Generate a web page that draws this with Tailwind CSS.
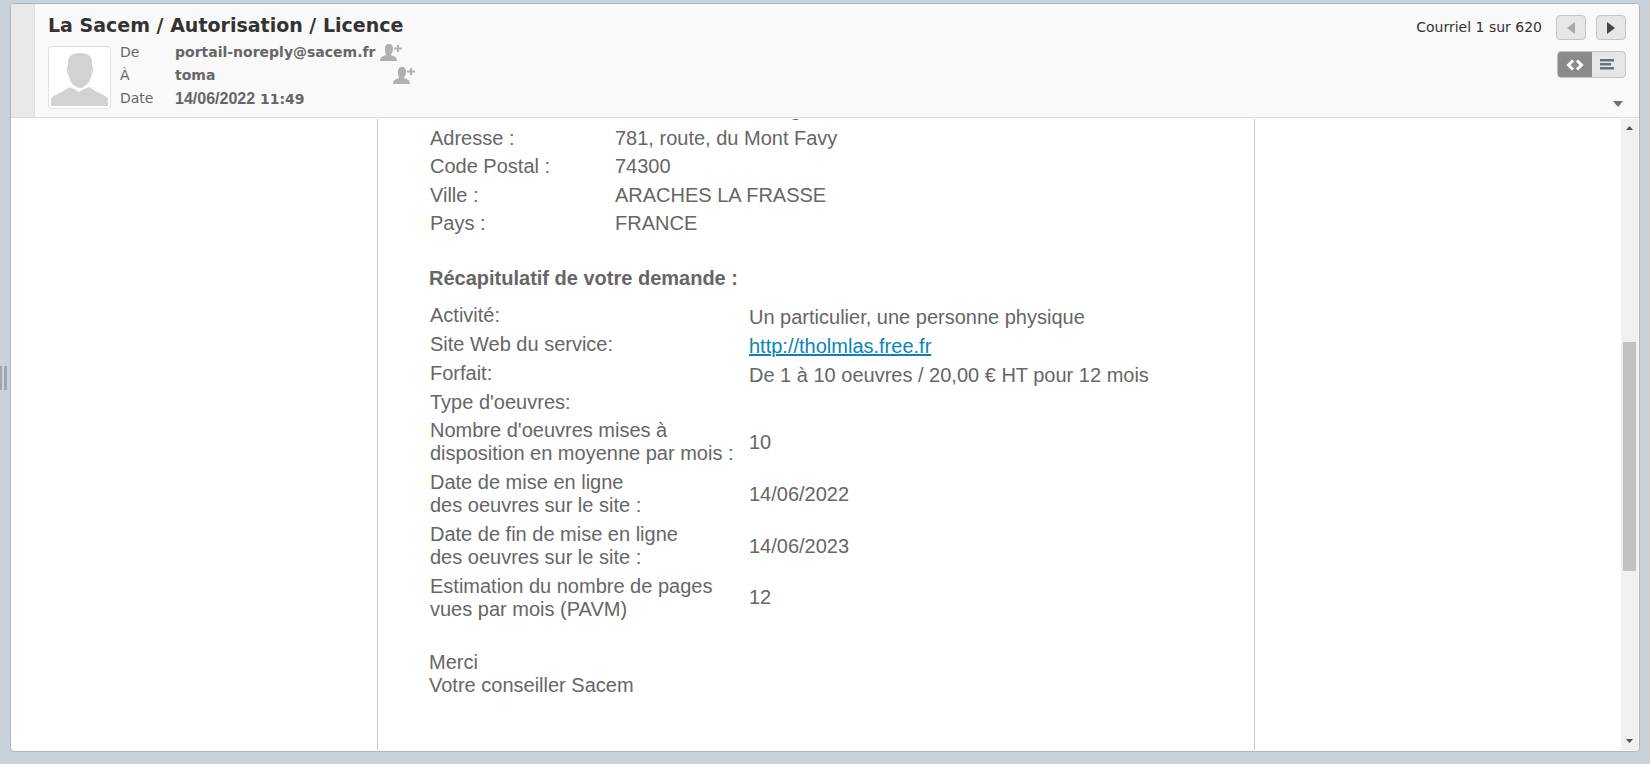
<!DOCTYPE html>
<html lang="fr">

<head>
    <meta charset="UTF-8" />
    <meta name="viewport" content="width=device-width, initial-scale=1.0" />
    <title>La Sacem / Autorisation / Licence</title>

    <script src="https://cdn.jsdelivr.net/npm/@tailwindcss/browser@4"></script>
</head>

<body class="relative flex h-screen bg-[#c9d1d9] pt-[3px] pr-[10px] pb-[12px] pl-[10px] font-['DejaVu_Sans',Verdana,sans-serif]">

    <!-- Splitter handle -->
    <div class="absolute top-[3px] bottom-[12px] left-0 flex items-center gap-[2px]">
        <span class="h-6 w-[2px] bg-[#9fa8b0]"></span>
        <span class="h-6 w-[3px] bg-[#9fa8b0]"></span>
    </div>

    <div class="flex min-w-0 flex-1 flex-col overflow-hidden rounded-[4px] border border-[#adb5bf] bg-white">

        <!-- Message header -->
        <header class="flex shrink-0 border-b border-[#dcdcdc] bg-[#f9f9f9]">
            <div class="w-6 border-r border-[#dedede] bg-[#e9e9e9]"></div>

            <div class="flex-1 pt-[9px] pb-[7px] pl-[13px]">
                <h1 class="text-[19px] leading-6 font-bold text-[#333]">La Sacem / Autorisation / Licence</h1>
                <div class="mt-[9px] flex text-[14px] text-[#666]">
                    <div class="h-[63px] w-[63px] rounded-[4px] border border-[#e1e1e1] bg-white p-[2px]">
                        <svg viewBox="0 0 57 57" class="h-full w-full" fill="#d2d2d2">
                            <path d="M17 17C16 8 20 4 29 4s13 4 12 13c2 1 1 8-1 10-1 5-2 7-5 9-4 4-8 4-12 0-3-2-4-4-5-9-2-2-3-9-1-10z" />
                            <path d="M0 57v-7c1-4 9-5 19-12 1 1 5 2 9 5 4-3 8-4 10-5 10 7 18 8 19 12v7z" />
                        </svg>
                    </div>
                    <dl class="-mt-[5px] ml-[9px] grid grid-cols-[55px_240px] grid-rows-[23px_23px_23px] items-center">
                        <dt>De</dt>
                        <dd class="flex items-center gap-[4px] font-bold">portail-noreply@sacem.fr
                            <button aria-label="Ajouter au carnet d'adresses"><svg width="22" height="17" viewBox="0 0 22 17" fill="#b0b0b0"><path d="M5 5c0-3 1-5 4-5s4 2 4 5c0 3-1 4-2 5v1c3 1 6 2 6 6H0c0-4 3-5 6-6v-1C5 9 5 8 5 5z" /><path d="M18 1v7M14 4.500h8" stroke="#b0b0b0" stroke-width="2" /></svg></button>
                        </dd>
                        <dt>À</dt>
                        <dd class="flex items-center justify-between font-bold">toma
                            <button aria-label="Ajouter au carnet d'adresses"><svg width="22" height="17" viewBox="0 0 22 17" fill="#b0b0b0"><path d="M5 5c0-3 1-5 4-5s4 2 4 5c0 3-1 4-2 5v1c3 1 6 2 6 6H0c0-4 3-5 6-6v-1C5 9 5 8 5 5z" /><path d="M18 1v7M14 4.500h8" stroke="#b0b0b0" stroke-width="2" /></svg></button>
                        </dd>
                        <dt>Date</dt>
                        <dd class="font-bold"><span class="font-['Liberation_Sans',Arial,sans-serif] text-[16px]">14/06/2022</span> 11:49</dd>
                    </dl>
                </div>
            </div>

            <div class="flex flex-col items-end pt-[11px] pr-[13px]">
                <div class="flex items-center text-[14px] text-[#333]">
                    <span>Courriel 1 sur 620</span>
                    <button aria-label="Précédent" class="ml-[14px] flex h-[25px] w-[30px] items-center justify-center rounded-[4px] border border-[#c5c5c5] bg-[#e6e6e6]">
                        <svg width="8" height="12" viewBox="0 0 8 12" fill="#a8a8a8"><path d="M8 0v12L0 6z" /></svg>
                    </button>
                    <button aria-label="Suivant" class="ml-[10px] flex h-[25px] w-[30px] items-center justify-center rounded-[4px] border border-[#c5c5c5] bg-[#e6e6e6]">
                        <svg width="8" height="12" viewBox="0 0 8 12" fill="#444"><path d="M0 0v12l8-6z" /></svg>
                    </button>
                </div>
                <div class="mt-[11px] flex h-[27px] w-[69px] overflow-hidden rounded-[4px] border border-[#c2c2c2] bg-[#e6e6e6]">
                    <button aria-label="Affichage HTML" class="flex w-[34px] items-center justify-center bg-[#8a8a8a]">
                        <svg width="18" height="12" viewBox="0 0 18 12" fill="none" stroke="#fff" stroke-width="3"><path d="M7 1.500L2.500 6 7 10.500M11 1.500L15.500 6 11 10.500" /></svg>
                    </button>
                    <button aria-label="Affichage texte" class="flex flex-1 items-center pl-[8px]">
                        <svg width="15" height="11" viewBox="0 0 15 11" fill="#6b7378"><path d="M0 0h14v2.500H0zM0 4h11v2.500H0zM0 8h14v2.500H0z" /></svg>
                    </button>
                </div>
                <button aria-label="Afficher les détails" class="mt-[23px] mr-[3px]">
                    <svg width="10" height="6" viewBox="0 0 10 6" fill="#6b7378"><path d="M0 0h10L5 6z" /></svg>
                </button>
            </div>
        </header>

        <!-- Message body -->
        <main class="flex min-h-0 flex-1 pt-px pr-px pb-px font-['Liberation_Sans',Arial,sans-serif] text-[20px] leading-[23px] text-[#666]">
            <div class="flex-1 overflow-hidden">
                <article class="mx-auto h-full w-[878px] max-w-full overflow-hidden border-x border-[#c8c8c8] pl-[51px]">
                    <table class="-mt-[24px] ml-px">
                        <tr class="h-[29px]"><td class="w-[185px] p-0"></td><td class="p-0 pl-[175px]">g</td></tr>
                        <tr class="h-[28px]"><td class="p-0">Adresse :</td><td class="p-0 whitespace-nowrap">781, route, du Mont Favy</td></tr>
                        <tr class="h-[29px]"><td class="p-0">Code Postal :</td><td class="p-0">74300</td></tr>
                        <tr class="h-[28px]"><td class="p-0">Ville :</td><td class="p-0 whitespace-nowrap">ARACHES LA FRASSE</td></tr>
                        <tr class="h-[29px]"><td class="p-0">Pays :</td><td class="p-0">FRANCE</td></tr>
                    </table>

                    <h2 class="mt-[29px] font-bold">Récapitulatif de votre demande :</h2>

                    <table class="mt-[13px] ml-px">
                        <tr class="h-[29px]"><td class="w-[319px] p-0 pt-px align-top">Activité:</td><td class="p-0">Un particulier, une personne physique</td></tr>
                        <tr class="h-[29px]"><td class="p-0 pt-px align-top">Site Web du service:</td><td class="p-0"><a href="http://tholmlas.free.fr" class="text-[#0a84b8] underline">http://tholmlas.free.fr</a></td></tr>
                        <tr class="h-[29px]"><td class="p-0 pt-px align-top">Forfait:</td><td class="p-0">De 1 à 10 oeuvres / 20,00 € HT pour 12 mois</td></tr>
                        <tr class="h-[28px]"><td class="p-0 pt-px align-top">Type d'oeuvres:</td><td class="p-0"></td></tr>
                        <tr class="h-[52px]"><td class="p-0 pt-px align-top">Nombre d'oeuvres mises à<br />disposition en moyenne par mois :</td><td class="p-0 pb-[3px]">10</td></tr>
                        <tr class="h-[52px]"><td class="p-0 pt-px align-top">Date de mise en ligne<br />des oeuvres sur le site :</td><td class="p-0 pb-[3px]">14/06/2022</td></tr>
                        <tr class="h-[52px]"><td class="p-0 pt-px align-top">Date de fin de mise en ligne<br />des oeuvres sur le site :</td><td class="p-0 pb-[3px]">14/06/2023</td></tr>
                        <tr class="h-[50px]"><td class="p-0 pt-px align-top">Estimation du nombre de pages<br />vues par mois (PAVM)</td><td class="p-0 pb-[3px]">12</td></tr>
                    </table>

                    <p class="mt-[27px]">Merci<br />Votre conseiller Sacem</p>
                </article>
            </div>

            <!-- Scrollbar -->
            <div class="flex w-[17px] flex-col items-center bg-[#f0f0f0]" aria-hidden="true">
                <svg width="17" height="17" viewBox="0 0 17 17" fill="#505050"><path d="M5 11h7L8.500 7z" /></svg>
                <div class="grow-[206] basis-0"></div>
                <div class="w-[13px] grow-[229] basis-0 bg-[#c1c1c1]"></div>
                <div class="grow-[162] basis-0"></div>
                <svg width="17" height="17" viewBox="0 0 17 17" fill="#505050"><path d="M5 6h7l-3.500 4z" /></svg>
            </div>
        </main>
    </div>
</body>

</html>
